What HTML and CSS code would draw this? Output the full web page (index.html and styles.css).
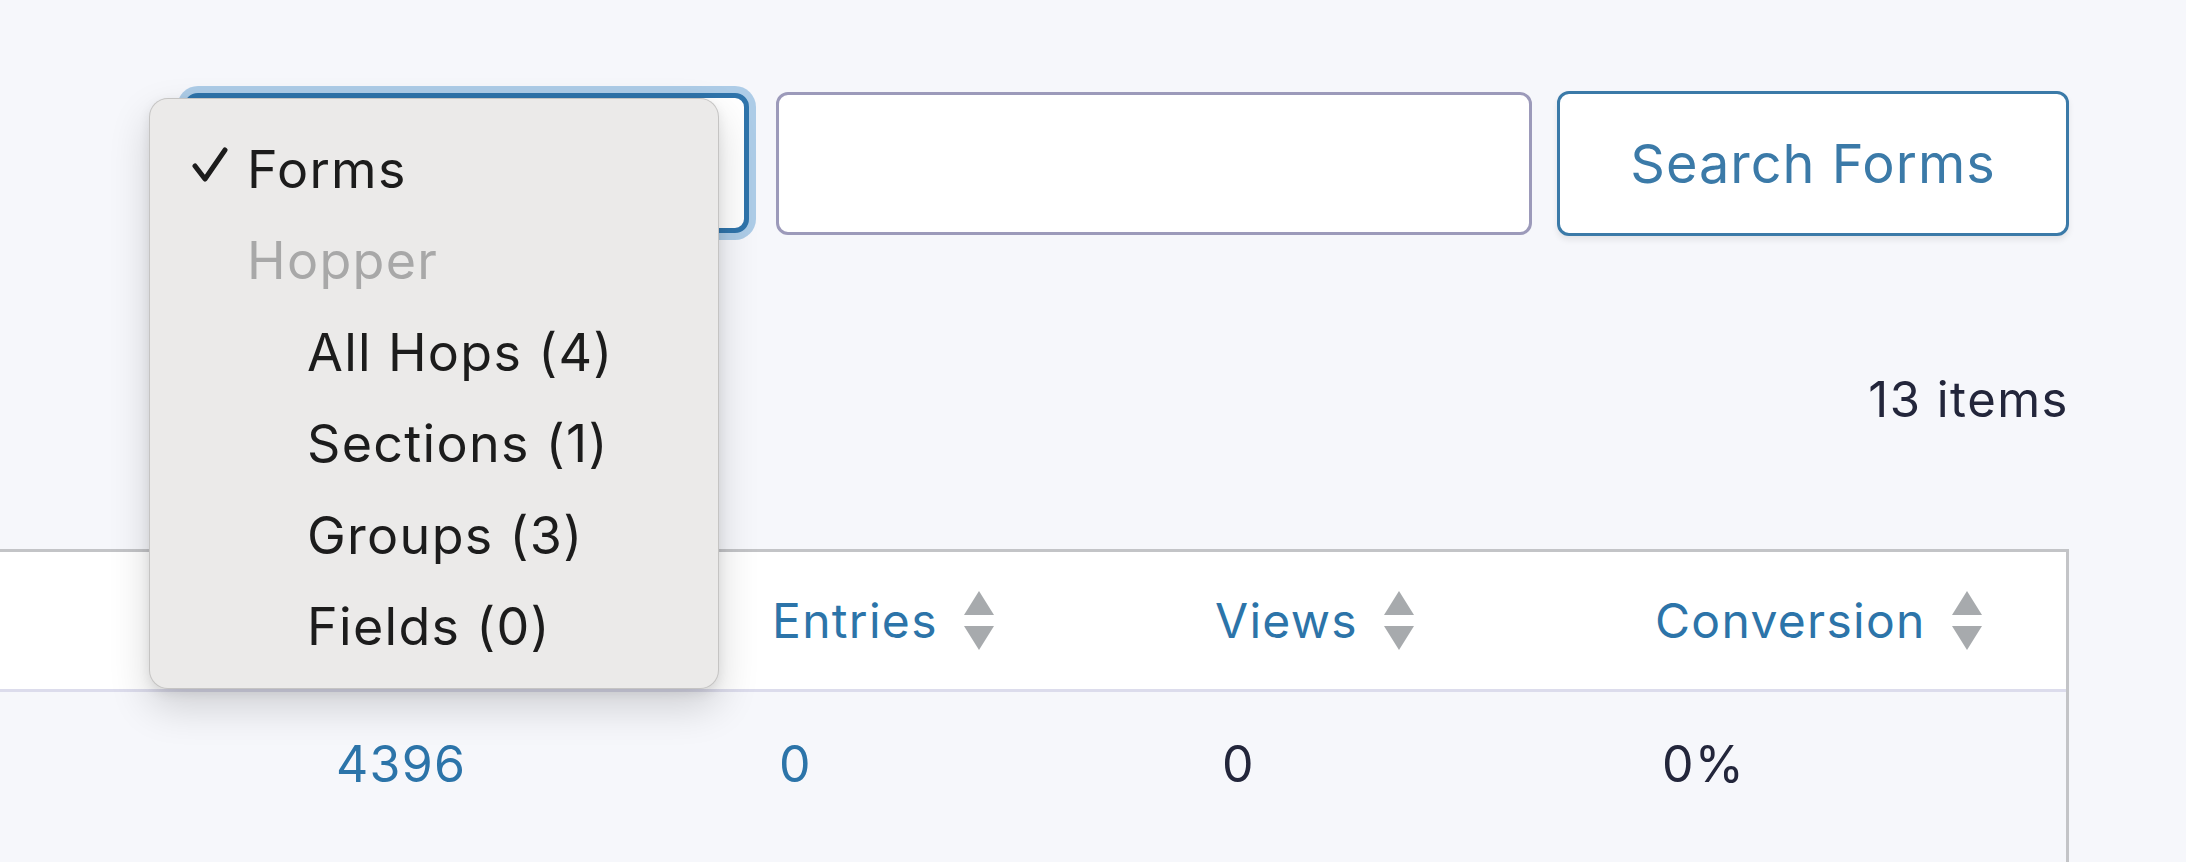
FILE: index.html
```html
<!DOCTYPE html>
<html lang="en">
<head>
<meta charset="utf-8">
<title>Forms</title>
<link rel="stylesheet" href="styles.css">
</head>
<body>
<div class="page">
  <div class="toolbar">
    <div class="select-wrap">
      <div class="select"></div>
      <div class="menu">
        <div class="item checked"><svg class="check" width="38" height="36" viewBox="0 0 38 36"><path d="M4 19 L14 32 L34 3" fill="none" stroke="#1c1c1c" stroke-width="5" stroke-linecap="round" stroke-linejoin="round"/></svg>Forms</div>
        <div class="item group">Hopper</div>
        <div class="item sub">All Hops (4)</div>
        <div class="item sub">Sections (1)</div>
        <div class="item sub">Groups (3)</div>
        <div class="item sub">Fields (0)</div>
      </div>
    </div>
    <input class="search-input" type="text" aria-label="Search">
    <button class="btn">Search Forms</button>
  </div>

  <div class="count">13 items</div>

  <div class="table">
    <div class="row head">
      <div class="cell"></div>
      <div class="cell th"></div>
      <div class="cell th">Entries<span class="sort"><span class="up"></span><span class="down"></span></span></div>
      <div class="cell th">Views<span class="sort"><span class="up"></span><span class="down"></span></span></div>
      <div class="cell th">Conversion<span class="sort"><span class="up"></span><span class="down"></span></span></div>
    </div>
    <div class="row body">
      <div class="cell"></div>
      <div class="cell td link">4396</div>
      <div class="cell td link">0</div>
      <div class="cell td">0</div>
      <div class="cell td">0%</div>
    </div>
  </div>
</div>
</body>
</html>
```

FILE: styles.css
```css
* { box-sizing: border-box; }
html, body { margin: 0; padding: 0; }
body {
  background: #f6f7fb;
  font-family: Inter, "Liberation Sans", sans-serif;
  color: #23263b;
  width: 2186px;
  height: 862px;
  overflow: hidden;
}
.page {
  padding: 91px 117px 0 0;
}
.toolbar {
  display: flex;
  justify-content: flex-end;
  align-items: flex-start;
}
.select-wrap {
  position: relative;
  width: 565px;
  height: 140px;
  margin-top: 2px;
}
.select {
  height: 100%;
  background: #fff;
  border: 5px solid #2f74ab;
  border-radius: 14px;
  box-shadow: 0 0 0 7px rgba(125, 175, 218, 0.6);
}
.menu {
  position: absolute;
  left: -35px;
  top: 5px;
  width: 570px;
  height: 591px;
  padding-top: 25px;
  background: #ebeae9;
  border: 1px solid rgba(0, 0, 0, 0.16);
  border-radius: 19px;
  box-shadow: 0 18px 40px rgba(0, 0, 0, 0.16), 0 4px 12px rgba(0, 0, 0, 0.08);
  font-size: 52px;
  letter-spacing: 1.3px;
  color: #1c1c1c;
  z-index: 10;
}
.item {
  height: 91.4px;
  line-height: 91px;
  padding-left: 97px;
  position: relative;
  white-space: nowrap;
}
.check {
  position: absolute;
  left: 41px;
  top: 23px;
}
.group { color: #a8a8a8; }
.sub { padding-left: 157px; }
.search-input {
  width: 756px;
  height: 143px;
  margin: 1px 0 0 27px;
  background: #fff;
  border: 3px solid #9c9aba;
  border-radius: 12px;
  font: inherit;
  outline: none;
}
.btn {
  width: 512px;
  height: 145px;
  margin-left: 25px;
  background: #fff;
  border: 3px solid #3b7aa8;
  border-radius: 12px;
  color: #3b7aa8;
  font-family: Inter, "Liberation Sans", sans-serif;
  font-size: 54px;
  letter-spacing: 1px;
  box-shadow: 0 4px 6px rgba(0, 0, 0, 0.08);
  padding: 0;
}
.count {
  margin-top: 134px;
  height: 60px;
  line-height: 60px;
  text-align: right;
  font-size: 49px;
  letter-spacing: 1.5px;
}
.table {
  margin-top: 119px;
  border-top: 3px solid #c3c4c7;
  border-right: 3px solid #c3c4c7;
}
.row {
  display: grid;
  grid-template-columns: 301px 443px 443px 440px 1fr;
  align-items: center;
}
.head {
  height: 140px;
  background: #fff;
  border-bottom: 3px solid #dcdcec;
}
.body {
  height: 200px;
  align-items: start;
}
.cell { white-space: nowrap; }
.th {
  padding-left: 28px;
  color: #2c74a9;
  font-size: 48px;
  letter-spacing: 1.3px;
  display: flex;
  align-items: center;
}
.td {
  padding-left: 35px;
  padding-top: 42px;
  font-size: 50px;
  line-height: 60px;
  letter-spacing: 1.3px;
}
.link { color: #2c74a9; }
.sort {
  display: inline-flex;
  flex-direction: column;
  gap: 11px;
  margin-left: 26px;
}
.up, .down {
  width: 0;
  height: 0;
  border-left: 15px solid transparent;
  border-right: 15px solid transparent;
}
.up { border-bottom: 24px solid #a7aaad; }
.down { border-top: 24px solid #a7aaad; }
```
